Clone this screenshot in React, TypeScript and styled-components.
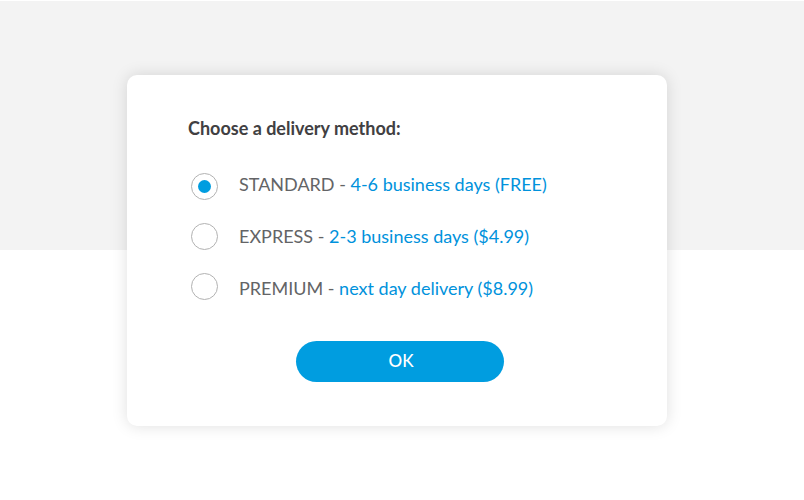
import React, { useState } from "react";
import styled, { createGlobalStyle } from "styled-components";

const GlobalStyle = createGlobalStyle`
  * { box-sizing: border-box; }
  body {
    margin: 0;
    background: #ffffff;
    font-family: Lato, Inter, "Liberation Sans", sans-serif;
  }
`;

const Page = styled.main`
  display: flex;
  justify-content: center;
  align-items: flex-start;
  min-height: 100vh;
  padding: 74px 137px 74px 127px;
  border-top: 1px solid #ffffff;
  background: linear-gradient(#f3f3f3 50%, #ffffff 50%) border-box;
`;

const Card = styled.form`
  flex: 1;
  max-width: 540px;
  padding: 39px 55px 44px 61px;
  border-radius: 10px;
  background: #ffffff;
  box-shadow: 0 0 16px rgba(0, 0, 0, 0.13);
`;

const Group = styled.fieldset`
  margin: 0;
  padding: 0;
  border: 0;
`;

const Title = styled.legend`
  padding: 0 0 28px;
  font-size: 18px;
  line-height: 28px;
  font-weight: 700;
  color: #414042;
`;

const Options = styled.div`
  display: flex;
  align-items: center;
  gap: 21px;
  padding-left: 3px;
`;

const Column = styled.div<{ $gap: number }>`
  display: flex;
  flex-direction: column;
  gap: ${(p) => p.$gap}px;
`;

const Radio = styled.input`
  appearance: none;
  display: grid;
  place-items: center;
  width: 27px;
  height: 27px;
  margin: 0;
  border: 1px solid #b2b2b2;
  border-radius: 50%;
  background: #ffffff;
  cursor: pointer;

  &:checked::before {
    content: "";
    width: 13px;
    height: 13px;
    border-radius: 50%;
    background: #009de0;
  }
`;

const OptionLabel = styled.label`
  font-size: 18px;
  line-height: 28px;
  color: #636466;
  cursor: pointer;
`;

const Detail = styled.span`
  color: #0092dc;
`;

const Submit = styled.button`
  display: block;
  width: 208px;
  height: 41px;
  margin: 39px auto 0;
  padding: 0 0 2px 2px;
  border: 0;
  border-radius: 21px;
  background: #009de0;
  color: #ffffff;
  font: 500 17px Lato, Inter, sans-serif;
  cursor: pointer;
`;

const methods = [
  { id: "standard", name: "STANDARD", detail: "4-6 business days (FREE)" },
  { id: "express", name: "EXPRESS", detail: "2-3 business days ($4.99)" },
  { id: "premium", name: "PREMIUM", detail: "next day delivery ($8.99)" },
];

export default function App() {
  const [selected, setSelected] = useState("standard");
  return (
    <>
      <GlobalStyle />
      <Page>
        <Card onSubmit={(e) => e.preventDefault()}>
          <Group>
            <Title>Choose a delivery method:</Title>
            <Options>
              <Column $gap={23}>
                {methods.map((m) => (
                  <Radio
                    key={m.id}
                    type="radio"
                    id={m.id}
                    name="delivery"
                    checked={selected === m.id}
                    onChange={() => setSelected(m.id)}
                  />
                ))}
              </Column>
              <Column $gap={24}>
                {methods.map((m) => (
                  <OptionLabel key={m.id} htmlFor={m.id}>
                    {m.name} - <Detail>{m.detail}</Detail>
                  </OptionLabel>
                ))}
              </Column>
            </Options>
          </Group>
          <Submit type="submit">OK</Submit>
        </Card>
      </Page>
    </>
  );
}
